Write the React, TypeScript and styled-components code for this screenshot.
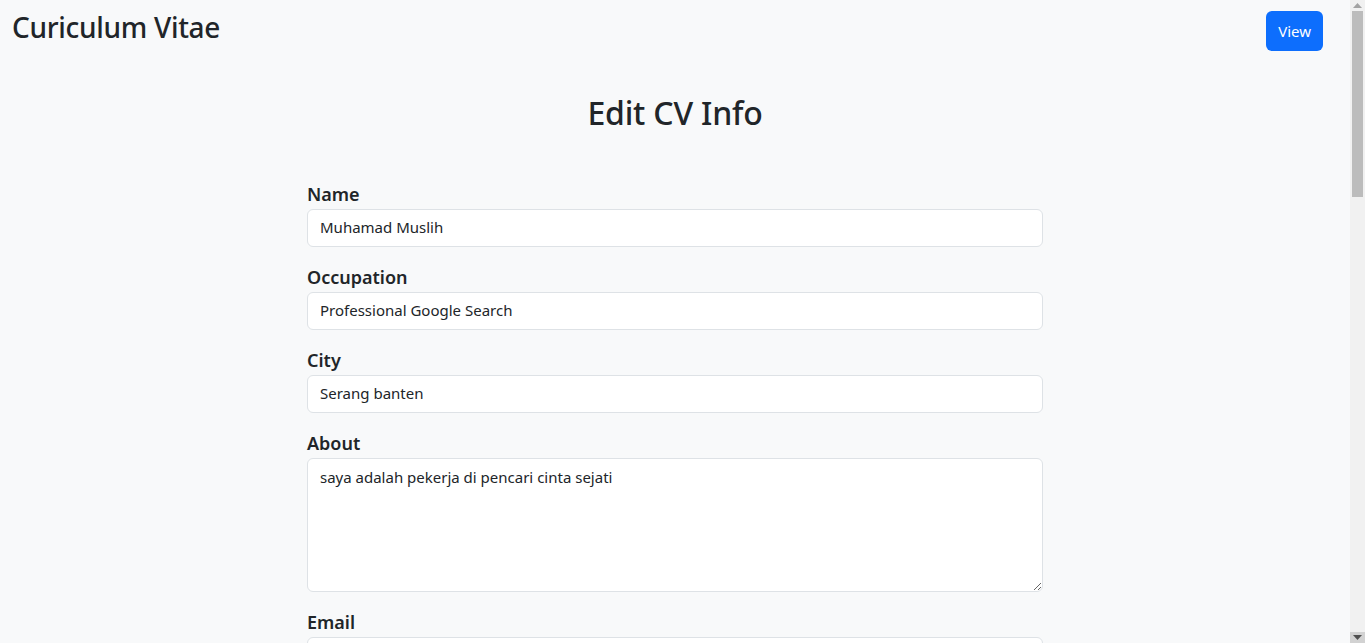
import React from "react";
import styled, { createGlobalStyle } from "styled-components";

const Global = createGlobalStyle`
  html, body { margin: 0; padding: 0; }
  body {
    background: #f8f9fa;
    color: #212529;
    font-family: "Noto Sans", "Open Sans", sans-serif;
    padding-right: 15px;
  }
  * { box-sizing: border-box; }
`;

const Header = styled.header`
  display: flex;
  justify-content: space-between;
  align-items: flex-start;
  padding: 11px 27px 0 12px;
`;

const Brand = styled.h3`
  margin: 0;
  font-size: 28px;
  font-weight: 500;
  line-height: 33px;
  letter-spacing: -0.3px;
`;

const ViewButton = styled.button`
  height: 40px;
  padding: 0 12px;
  border: none;
  border-radius: 6px;
  background: #0d6efd;
  color: #fff;
  font-family: inherit;
  font-size: 15px;
  cursor: pointer;
`;

const Main = styled.main`
  width: 736px;
  margin: 0 auto;
  padding-bottom: 1500px;
`;

const Title = styled.h1`
  margin: 44px 0 50px;
  text-align: center;
  font-size: 32px;
  font-weight: 500;
  line-height: 36px;
  letter-spacing: -0.2px;
`;

const Group = styled.div`
  margin-bottom: 17px;
`;

const Label = styled.label`
  display: block;
  font-size: 18px;
  font-weight: 600;
  line-height: 26px;
  margin-bottom: 2px;
`;

const Input = styled.input`
  display: block;
  width: 100%;
  height: 38px;
  padding: 0 12px 2px;
  border: 1px solid #dee2e6;
  border-radius: 6px;
  background: #fff;
  color: #212529;
  font-family: inherit;
  font-size: 15px;
`;

const TextArea = styled.textarea`
  display: block;
  width: 100%;
  height: 134px;
  padding: 6px 12px;
  border: 1px solid #dee2e6;
  border-radius: 6px;
  background: #fff;
  color: #212529;
  font-family: inherit;
  font-size: 15px;
  line-height: 24px;
  resize: vertical;
`;

/* imitation of the browser's classic scrollbar, drawn over the page edge */
const ScrollBar = styled.div`
  position: fixed;
  top: 0;
  right: 0;
  width: 15px;
  height: 100vh;
  background: #f1f1f1;
  display: flex;
  flex-direction: column;
`;

const ArrowBtn = styled.div<{ $dark?: boolean }>`
  height: 11px;
  flex: none;
  display: flex;
  align-items: center;
  justify-content: center;
  background: ${(p) => (p.$dark ? "#d2d2d2" : "#f1f1f1")};
`;

const Thumb = styled.div`
  margin: 0 2px;
  height: 186px;
  background: #bcbcbc;
  flex: none;
`;

const Track = styled.div`
  flex: 1;
`;

export default function App() {
  return (
    <>
      <Global />
      <Header>
        <Brand>Curiculum Vitae</Brand>
        <ViewButton>View</ViewButton>
      </Header>
      <Main>
        <Title>Edit CV Info</Title>
        <Group>
          <Label>Name</Label>
          <Input defaultValue="Muhamad Muslih" />
        </Group>
        <Group>
          <Label>Occupation</Label>
          <Input defaultValue="Professional Google Search" />
        </Group>
        <Group>
          <Label>City</Label>
          <Input defaultValue="Serang banten" />
        </Group>
        <Group>
          <Label>About</Label>
          <TextArea defaultValue="saya adalah pekerja di pencari cinta sejati" />
        </Group>
        <Group>
          <Label>Email</Label>
          <Input defaultValue="" />
        </Group>
      </Main>
      <ScrollBar aria-hidden>
        <ArrowBtn>
          <svg width="9" height="5" viewBox="0 0 9 5">
            <polygon points="0,5 4.5,0 9,5" fill="#a3a3a3" />
          </svg>
        </ArrowBtn>
        <Thumb />
        <Track />
        <ArrowBtn $dark>
          <svg width="9" height="5" viewBox="0 0 9 5">
            <polygon points="0,0 4.5,5 9,0" fill="#505050" />
          </svg>
        </ArrowBtn>
      </ScrollBar>
    </>
  );
}
